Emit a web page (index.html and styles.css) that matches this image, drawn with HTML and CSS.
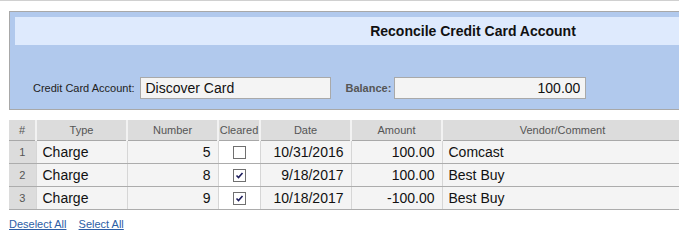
FILE: index.html
```html
<!DOCTYPE html>
<html lang="en">
<head>
    <meta charset="UTF-8">
    <title>Reconcile Credit Card Account</title>
    <link rel="stylesheet" href="styles.css">
</head>
<body>
    <div class="panel">
        <div class="title-band">Reconcile Credit Card Account</div>
        <div class="fields">
            <label class="field-label">Credit Card Account:</label>
            <input type="text" class="field-input" value="Discover Card">
            <label class="field-label balance-label">Balance:</label>
            <input type="text" class="field-input amount-input" value="100.00">
        </div>
    </div>

    <table class="grid">
        <colgroup>
            <col class="col-num">
            <col class="col-type">
            <col class="col-number">
            <col class="col-cleared">
            <col class="col-date">
            <col class="col-amount">
            <col class="col-vendor">
        </colgroup>
        <thead>
            <tr>
                <th>#</th>
                <th>Type</th>
                <th>Number</th>
                <th>Cleared</th>
                <th>Date</th>
                <th>Amount</th>
                <th>Vendor/Comment</th>
            </tr>
        </thead>
        <tbody>
            <tr>
                <td class="row-num">1</td>
                <td>Charge</td>
                <td class="right">5</td>
                <td class="cleared"><span class="box"></span></td>
                <td class="right">10/31/2016</td>
                <td class="right">100.00</td>
                <td>Comcast</td>
            </tr>
            <tr>
                <td class="row-num">2</td>
                <td>Charge</td>
                <td class="right">8</td>
                <td class="cleared"><span class="box"><svg width="11" height="11" viewBox="0 0 11 11"><path d="M2.5 5.5 L4.5 7.5 L8.5 3" fill="none" stroke="#1c1c5c" stroke-width="1.6"/></svg></span></td>
                <td class="right">9/18/2017</td>
                <td class="right">100.00</td>
                <td>Best Buy</td>
            </tr>
            <tr>
                <td class="row-num">3</td>
                <td>Charge</td>
                <td class="right">9</td>
                <td class="cleared"><span class="box"><svg width="11" height="11" viewBox="0 0 11 11"><path d="M2.5 5.5 L4.5 7.5 L8.5 3" fill="none" stroke="#1c1c5c" stroke-width="1.6"/></svg></span></td>
                <td class="right">10/18/2017</td>
                <td class="right">-100.00</td>
                <td>Best Buy</td>
            </tr>
        </tbody>
    </table>

    <div class="links">
        <a href="#">Deselect All</a>
        <a href="#">Select All</a>
    </div>
</body>
</html>
```

FILE: styles.css
```css
html, body {
    overflow: hidden;
}
body {
    margin: 0;
    border-top: 1px solid #d0d0d0;
    font-family: "Liberation Sans", Arial, sans-serif;
    background-color: white;
    color: #222;
}
.panel {
    margin: 10px 0 0 9px;
    width: 916px;
    padding: 5px;
    border: 1px solid #a8a8a8;
    background-color: #b1c9ed;
}
.title-band {
    height: 28px;
    line-height: 28px;
    background-color: #deeafd;
    text-align: center;
    font-size: 14px;
    font-weight: bold;
    color: #111;
}
.fields {
    display: flex;
    align-items: center;
    margin-top: 32px;
    margin-bottom: 5px;
    padding-left: 18px;
}
.field-label {
    font-size: 11px;
    color: #222;
    margin-right: 5px;
}
.balance-label {
    margin-left: 15px;
    margin-right: 3px;
    font-weight: bold;
    color: #555;
}
.field-input {
    box-sizing: border-box;
    width: 191px;
    height: 22px;
    padding: 0 5px;
    border: 1px solid #a9a9a9;
    background-color: #f4f4f4;
    font-family: "Liberation Sans", Arial, sans-serif;
    font-size: 14px;
    color: #111;
}
.amount-input {
    width: 192px;
    text-align: right;
}
.grid {
    margin: 10px 0 0 9px;
    border-collapse: collapse;
    table-layout: fixed;
    width: 673px;
}
.col-num { width: 27px; }
.col-type { width: 91px; }
.col-number { width: 91px; }
.col-cleared { width: 42px; }
.col-date { width: 91px; }
.col-amount { width: 91px; }
.col-vendor { width: 240px; }
.grid th {
    box-sizing: border-box;
    height: 20px;
    padding: 0;
    background-color: #dcdcdc;
    color: #555;
    font-size: 11px;
    font-weight: normal;
    border-left: 2px solid #f2f2f2;
    border-bottom: 1px solid #a8a8a8;
}
.grid th:first-child {
    border-left: none;
}
.grid td {
    box-sizing: border-box;
    height: 23px;
    padding: 0 6px;
    background-color: #f4f4f4;
    font-size: 14px;
    color: #111;
    border-left: 1px solid #d6d6d6;
    border-bottom: 1px solid #acacac;
    white-space: nowrap;
}
.grid td:first-child {
    border-left: none;
}
.grid td.row-num {
    padding: 0;
    background-color: #dcdcdc;
    color: #555;
    font-size: 11px;
    text-align: center;
}
.grid td.right {
    text-align: right;
    padding-right: 7px;
}
.grid td.cleared {
    padding: 0;
    background-color: white;
    text-align: center;
}
.box {
    display: inline-block;
    width: 11px;
    height: 11px;
    border: 1px solid #707070;
    background-color: white;
    vertical-align: middle;
}
.box svg {
    display: block;
}
.links {
    margin: 8px 0 0 9px;
    font-size: 11px;
}
.links a {
    color: #2d5ea6;
    margin-right: 9px;
}
```
